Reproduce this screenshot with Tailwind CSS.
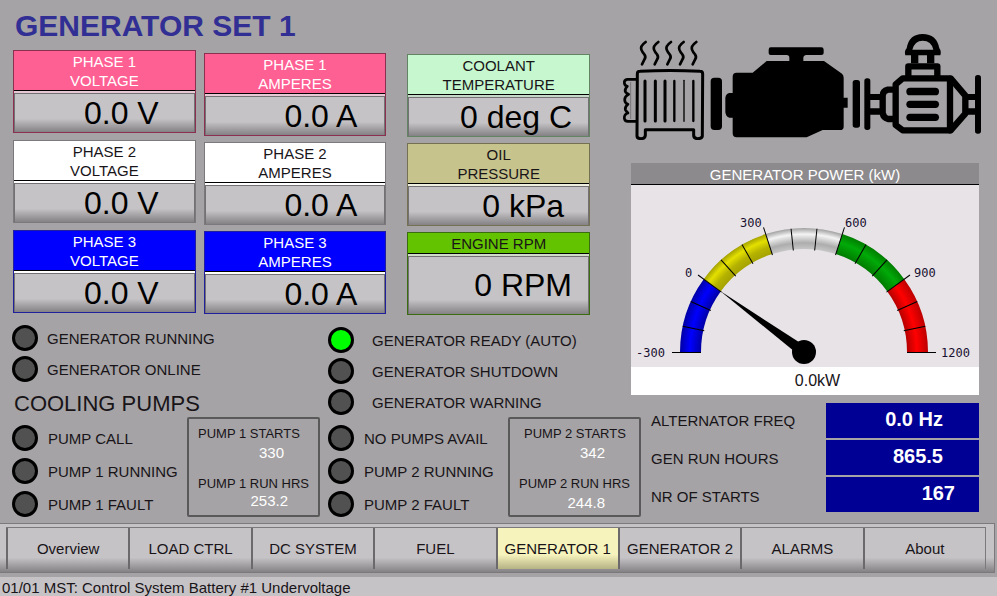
<!DOCTYPE html>
<html lang="en">
<head>
    <meta charset="UTF-8">
    <meta name="viewport" content="width=device-width, initial-scale=1.0">
    <title>Generator Set 1</title>
    <script src="https://cdn.jsdelivr.net/npm/@tailwindcss/browser@4"></script>
</head>
<body class="bg-[#a5a3a5] text-[#181418] text-[15px] leading-[19px] font-['Liberation_Sans',Arial,sans-serif]">
  <div class="min-h-screen flex flex-col">
    <main class="grid grid-cols-[622fr_375fr] grow">

      <!-- left side: readings and status lamps -->
      <section class="pl-3">
        <h1 class="mt-2 pl-[3px] text-3xl leading-9 font-bold text-[#312e94]">GENERATOR SET 1</h1>

        <div class="mt-[6px] ml-px mr-8 flex gap-2">
          <div class="flex-1 flex flex-col gap-[7px]">
            <div class="border border-[#8c3050] text-center">
              <h2 class="bg-[#ff6094] text-white pt-px border-b border-black">PHASE 1<br>VOLTAGE</h2>
              <p class="border-t-2 border-[#e8c8d4]"></p>
              <p class="border border-b-0 border-[#737173] bg-linear-to-b from-[#c6c3c6] from-65% to-[#848284] text-[32px] leading-[38px] text-black text-right pr-[35px]">0.0 V</p>
            </div>
            <div class="border border-[#7b797b] text-center">
              <h2 class="bg-white pt-px border-b border-black">PHASE 2<br>VOLTAGE</h2>
              <p class="border-t-2 border-white"></p>
              <p class="border border-b-0 border-[#737173] bg-linear-to-b from-[#c6c3c6] from-65% to-[#848284] text-[32px] leading-[38px] text-black text-right pr-[35px]">0.0 V</p>
            </div>
            <div class="border border-[#21209c] text-center">
              <h2 class="bg-[#0000ff] text-white pt-px border-b border-black">PHASE 3<br>VOLTAGE</h2>
              <p class="border-t-2 border-white"></p>
              <p class="border border-b-0 border-[#737173] bg-linear-to-b from-[#c6c3c6] from-65% to-[#848284] text-[32px] leading-[38px] text-black text-right pr-[35px]">0.0 V</p>
            </div>
          </div>

          <div class="flex-1 flex flex-col gap-[6px] pt-[3px]">
            <div class="border border-[#8c3050] text-center">
              <h2 class="bg-[#ff6094] text-white pt-px border-b border-black">PHASE 1<br>AMPERES</h2>
              <p class="border-t-2 border-[#e8c8d4]"></p>
              <p class="border border-b-0 border-[#737173] bg-linear-to-b from-[#c6c3c6] from-65% to-[#848284] text-[32px] leading-[38px] text-black text-right pr-[27px]">0.0 A</p>
            </div>
            <div class="border border-[#7b797b] text-center">
              <h2 class="bg-white pt-px border-b border-black">PHASE 2<br>AMPERES</h2>
              <p class="border-t-2 border-white"></p>
              <p class="border border-b-0 border-[#737173] bg-linear-to-b from-[#c6c3c6] from-65% to-[#848284] text-[32px] leading-[38px] text-black text-right pr-[27px]">0.0 A</p>
            </div>
            <div class="border border-[#21209c] text-center">
              <h2 class="bg-[#0000ff] text-white pt-px border-b border-black">PHASE 3<br>AMPERES</h2>
              <p class="border-t-2 border-white"></p>
              <p class="border border-b-0 border-[#737173] bg-linear-to-b from-[#c6c3c6] from-65% to-[#848284] text-[32px] leading-[38px] text-black text-right pr-[27px]">0.0 A</p>
            </div>
          </div>

          <div class="flex-1 flex flex-col gap-[6px] pt-1 ml-[13px]">
            <div class="border border-[#638463] text-center">
              <h2 class="bg-[#c6f7ce] pt-px border-b border-black">COOLANT<br>TEMPERATURE</h2>
              <p class="border-t-2 border-[#c6d8c8]"></p>
              <p class="border border-b-0 border-[#737173] bg-linear-to-b from-[#c6c3c6] from-65% to-[#848284] text-[32px] leading-[38px] text-black text-right pr-4">0 deg C</p>
            </div>
            <div class="border border-[#737152] text-center">
              <h2 class="bg-[#c6c38c] pt-px border-b border-black">OIL<br>PRESSURE</h2>
              <p class="border-t-2 border-[#efefe0]"></p>
              <p class="border border-b-0 border-[#737173] bg-linear-to-b from-[#c6c3c6] from-65% to-[#848284] text-[32px] leading-[38px] text-black text-right pr-6">0 kPa</p>
            </div>
            <div class="border border-[#396d10] text-center">
              <h2 class="bg-[#63c300] pt-px border-b border-black">ENGINE RPM</h2>
              <p class="border-t-2 border-[#d0dcc8]"></p>
              <p class="border border-b-0 border-[#737173] bg-linear-to-b from-[#c6c3c6] from-75% to-[#848284] text-[32px] leading-[57px] text-black text-right pr-4">0 RPM</p>
            </div>
          </div>
        </div>

        <!-- generator lamps -->
        <div class="mt-[10px] flex">
          <div class="w-[316px]">
            <ul class="flex flex-col gap-[5px]">
              <li class="flex items-center gap-[9px]"><span class="size-[26px] rounded-full border-3 border-black bg-[#525152]"></span>GENERATOR RUNNING</li>
              <li class="flex items-center gap-[9px]"><span class="size-[26px] rounded-full border-3 border-black bg-[#525152]"></span>GENERATOR ONLINE</li>
            </ul>
            <h2 class="mt-[10px] pl-[2px] text-[22px] leading-6">COOLING PUMPS</h2>
          </div>
          <ul class="flex flex-col gap-[5px] pt-[2px]">
            <li class="flex items-center gap-[18px]"><span class="size-[26px] rounded-full border-3 border-black bg-[#00ff00]"></span>GENERATOR READY (AUTO)</li>
            <li class="flex items-center gap-[18px]"><span class="size-[26px] rounded-full border-3 border-black bg-[#525152]"></span>GENERATOR SHUTDOWN</li>
            <li class="flex items-center gap-[18px]"><span class="size-[26px] rounded-full border-3 border-black bg-[#525152]"></span>GENERATOR WARNING</li>
          </ul>
        </div>

        <!-- pumps -->
        <div class="mt-px flex items-start -mr-[19px]">
          <ul class="w-[175px] flex flex-col gap-[7px] pt-2 whitespace-nowrap">
            <li class="flex items-center gap-[10px]"><span class="size-[26px] rounded-full border-3 border-black bg-[#525152]"></span>PUMP CALL</li>
            <li class="flex items-center gap-[10px]"><span class="size-[26px] rounded-full border-3 border-black bg-[#525152]"></span>PUMP 1 RUNNING</li>
            <li class="flex items-center gap-[10px]"><span class="size-[26px] rounded-full border-3 border-black bg-[#525152]"></span>PUMP 1 FAULT</li>
          </ul>
          <dl class="w-[133px] h-[100px] border-2 border-[#5a595a] rounded-xs pl-[9px] pt-[5px] whitespace-nowrap">
            <dt class="text-[13px]">PUMP 1 STARTS</dt>
            <dd class="text-white text-right pr-[34px]">330</dd>
            <dt class="text-[13px] mt-3">PUMP 1 RUN HRS</dt>
            <dd class="text-white text-right pr-[30px] leading-4">253.2</dd>
          </dl>
          <ul class="w-[180px] ml-2 flex flex-col gap-[7px] pt-2 whitespace-nowrap">
            <li class="flex items-center gap-[10px]"><span class="size-[26px] rounded-full border-3 border-black bg-[#525152]"></span>NO PUMPS AVAIL</li>
            <li class="flex items-center gap-[10px]"><span class="size-[26px] rounded-full border-3 border-black bg-[#525152]"></span>PUMP 2 RUNNING</li>
            <li class="flex items-center gap-[10px]"><span class="size-[26px] rounded-full border-3 border-black bg-[#525152]"></span>PUMP 2 FAULT</li>
          </ul>
          <dl class="w-[133px] h-[100px] border-2 border-[#5a595a] rounded-xs pl-[9px] pt-[5px] whitespace-nowrap">
            <dt class="text-[13px] pl-[5px]">PUMP 2 STARTS</dt>
            <dd class="text-white text-right pr-[34px]">342</dd>
            <dt class="text-[13px] mt-3">PUMP 2 RUN HRS</dt>
            <dd class="text-white text-right pr-[34px]">244.8</dd>
          </dl>
        </div>
      </section>

      <!-- right side: engine drawing, power gauge, counters -->
      <section class="pt-[30px] pr-3">
        <svg viewBox="36 15 1089 330" class="w-full block" fill="none" stroke="#000" stroke-linecap="round" stroke-linejoin="round">
          <!-- radiator -->
          <g stroke-width="8">
            <path d="M107 51q-17 12 -13 23q3 8 9 14q6 8 0 16l-7 14M145 51q-17 12 -13 23q3 8 9 14q6 8 0 16l-7 14M183 51q-17 12 -13 23q3 8 9 14q6 8 0 16l-7 14M221 51q-17 12 -13 23q3 8 9 14q6 8 0 16l-7 14M259 51q-17 12 -13 23q3 8 9 14q6 8 0 16l-7 14"/>
            <path stroke-width="9" d="M82 146Q82 139 90 139Q180 134 270 139Q278 139 278 147L277 333Q276 341 263 341Q251 341 251 331V314H106V331Q105 341 93 341Q81 341 81 333Z"/>
            <path stroke-width="9" d="M105 168V288M136 168V288M165 168V288"/>
            <path stroke-width="7" d="M193 168V288M250 168V288"/>
            <path stroke-width="4" d="M222 166V289"/>
            <path d="M78 163H52Q42 164 43 174Q44 182 52 184Q43 193 46 200Q50 206 56 208Q44 214 44 224Q44 234 54 238Q44 246 46 254Q50 260 54 264Q42 268 43 280Q44 289 54 289H78"/>
            <path stroke-width="3" stroke="#777" d="M62 172V281"/>
          </g>
          <!-- engine -->
          <g fill="#000" stroke="none">
            <rect x="302" y="158" width="34" height="157" rx="11"/>
            <path d="M380 143H428L470 108H538V98Q538 90 530 90H482Q476 90 476 84V74Q476 67 482 67H634Q641 67 641 74V84Q641 90 634 90H589Q580 91 580 99V108H642L696 146Q701 150 701 158V218H713V248H701V305Q701 315 690 315H638L590 337H380Q368 337 368 325V278H358Q348 276 346 262V218Q348 206 358 204H368V155Q368 143 380 143Z"/>
            <rect x="728" y="165" width="22" height="143" rx="8"/>
          </g>
          <!-- pump -->
          <g fill="#000" stroke="none">
            <rect x="763" y="160" width="18" height="155" rx="8"/>
            <rect x="1095" y="150" width="18" height="176" rx="8"/>
            <path d="M780 207H812V225H780ZM780 250H812V269H780ZM1070 207H1098V225H1070ZM1070 250H1098V269H1070Z"/>
            <rect x="889" y="188" width="98" height="23" rx="11"/>
            <rect x="889" y="227" width="98" height="22" rx="11"/>
            <rect x="889" y="266" width="98" height="22" rx="11"/>
            <path d="M903 88H925V115H903ZM951 88H973V115H951Z"/>
            <path fill-rule="evenodd" d="M886 91Q882 79 890 70Q897 27 938 27Q980 27 988 70Q995 79 991 91ZM907 74H970Q964 47 938 47Q914 47 907 74Z"/>
          </g>
          <g stroke-width="19">
            <path d="M850 194H834Q818 198 818 212V264Q820 278 834 282H850"/>
            <path d="M878 160H1022L1066 212V266L1022 316H878L857 300V178Z"/>
            <path d="M1020 162V316M895 156V124H982V156"/>
          </g>
        </svg>

        <div class="mt-[23px] ml-[9px] mr-[6px] bg-white">
          <h2 class="bg-[#8c8a8c] text-white text-center leading-[21px] h-[21px] pt-px">GENERATOR POWER (kW)</h2>
          <svg viewBox="0 0 348 182" class="w-full block bg-[#e7e3e7] border-t border-black" font-family="'DejaVu Sans Mono', monospace" font-size="12">
            <defs>
              <radialGradient id="blue" gradientUnits="userSpaceOnUse" cx="0" cy="0" r="124">
                <stop offset=".83" stop-color="#0000a5"/><stop offset=".92" stop-color="#0000ff"/><stop offset="1" stop-color="#0000a5"/>
              </radialGradient>
              <radialGradient id="yellow" gradientUnits="userSpaceOnUse" cx="0" cy="0" r="124">
                <stop offset=".83" stop-color="#a5a200"/><stop offset=".89" stop-color="#b5b200"/><stop offset=".95" stop-color="#e4e000"/><stop offset="1" stop-color="#a5a200"/>
              </radialGradient>
              <radialGradient id="white" gradientUnits="userSpaceOnUse" cx="0" cy="0" r="124">
                <stop offset=".83" stop-color="#c6c6c6"/><stop offset=".88" stop-color="#adadad"/><stop offset=".95" stop-color="#f4f4f4"/><stop offset="1" stop-color="#a0a0a0"/>
              </radialGradient>
              <radialGradient id="green" gradientUnits="userSpaceOnUse" cx="0" cy="0" r="124">
                <stop offset=".83" stop-color="#007b00"/><stop offset=".93" stop-color="#00aa08"/><stop offset="1" stop-color="#007d00"/>
              </radialGradient>
              <radialGradient id="red" gradientUnits="userSpaceOnUse" cx="0" cy="0" r="124">
                <stop offset=".83" stop-color="#b50000"/><stop offset=".91" stop-color="#ff0000"/><stop offset="1" stop-color="#bd0000"/>
              </radialGradient>
            </defs>
            <g transform="translate(173 167)">
              <g fill="none" stroke-width="21">
                <path stroke="url(#blue)" d="M-113.5 0A113.5 113.5 0 0 1 -91.8 -66.7"/>
                <path stroke="url(#yellow)" d="M-91.8 -66.7A113.5 113.5 0 0 1 -35.1 -107.9"/>
                <path stroke="url(#white)" d="M-35.1 -107.9A113.5 113.5 0 0 1 35.1 -107.9"/>
                <path stroke="url(#green)" d="M35.1 -107.9A113.5 113.5 0 0 1 91.8 -66.7"/>
                <path stroke="url(#red)" d="M91.8 -66.7A113.5 113.5 0 0 1 113.5 0"/>
              </g>
              <g stroke="#000" stroke-width="1">
                <path d="M-132 .5H-103"/>
                <path d="M-124 0H-102" transform="rotate(12)"/>
                <path d="M-124 0H-102" transform="rotate(24)"/>
                <path d="M-131 0H-102" transform="rotate(36)"/>
                <path d="M-124 0H-102" transform="rotate(48)"/>
                <path d="M-124 0H-102" transform="rotate(60)"/>
                <path d="M-131 0H-102" transform="rotate(72)"/>
                <path d="M-124 0H-102" transform="rotate(84)"/>
                <path d="M-124 0H-102" transform="rotate(96)"/>
                <path d="M-131 0H-102" transform="rotate(108)"/>
                <path d="M-124 0H-102" transform="rotate(120)"/>
                <path d="M-124 0H-102" transform="rotate(132)"/>
                <path d="M-131 0H-102" transform="rotate(144)"/>
                <path d="M-124 0H-102" transform="rotate(156)"/>
                <path d="M-124 0H-102" transform="rotate(168)"/>
                <path d="M103 .5H132"/>
              </g>
              <path d="M-104 0L-10 -5V5Z" transform="rotate(36)"/>
              <circle r="12"/>
            </g>
            <g fill="#181030">
              <text x="5" y="172">-300</text>
              <text x="54" y="92">0</text>
              <text x="109" y="42">300</text>
              <text x="214" y="42">600</text>
              <text x="283" y="92">900</text>
              <text x="310" y="172">1200</text>
            </g>
          </svg>
          <p class="text-center text-base leading-7 pl-[25px]">0.0kW</p>
        </div>

        <table class="mt-[6px] ml-7 w-[calc(100%-34px)] border-separate border-spacing-x-0 border-spacing-y-[2px]">
          <tr>
            <th scope="row" class="text-left font-normal pl-px">ALTERNATOR FREQ</th>
            <td class="w-[153px] h-[35px] bg-[#000094] text-white text-xl leading-6 font-bold text-right pr-9 pb-1">0.0 Hz</td>
          </tr>
          <tr>
            <th scope="row" class="text-left font-normal pl-px pt-[2px]">GEN RUN HOURS</th>
            <td class="w-[153px] h-[35px] bg-[#000094] text-white text-xl leading-6 font-bold text-right pr-9 pb-1">865.5</td>
          </tr>
          <tr>
            <th scope="row" class="text-left font-normal pl-px pt-1">NR OF STARTS</th>
            <td class="w-[153px] h-[35px] bg-[#000094] text-white text-xl leading-6 font-bold text-right pr-6 pb-1">167</td>
          </tr>
        </table>
      </section>
    </main>

    <!-- screen buttons -->
    <nav class="mt-[5px] mr-[2px] mb-1 h-[50px] border border-l-0 border-[#7b797b] bg-linear-to-b from-[#c6c3c6] from-70% to-[#848284] pt-[3px] pl-[6px] pr-2">
      <div class="flex h-[42px] border-t border-r border-[#7b797b]">
        <button class="flex-1 border-l-2 border-[#6b696b]">Overview</button>
        <button class="flex-1 border-l-2 border-[#6b696b]">LOAD CTRL</button>
        <button class="flex-1 border-l-2 border-[#6b696b]">DC SYSTEM</button>
        <button class="flex-1 border-l-2 border-[#6b696b]">FUEL</button>
        <button class="flex-1 border-l-2 border-[#6b696b] bg-linear-to-b from-[#f7f3bd] from-65% to-[#b5b284] whitespace-nowrap">GENERATOR 1</button>
        <button class="flex-1 border-l-2 border-[#6b696b] whitespace-nowrap">GENERATOR 2</button>
        <button class="flex-1 border-l-2 border-[#6b696b]">ALARMS</button>
        <button class="flex-1 border-l-2 border-[#6b696b]">About</button>
      </div>
    </nav>
    <footer class="bg-[#c6c3c6] pl-[2px] pt-[3px] h-[19px] leading-4">01/01 MST: Control System Battery #1 Undervoltage</footer>
  </div>
</body>
</html>
